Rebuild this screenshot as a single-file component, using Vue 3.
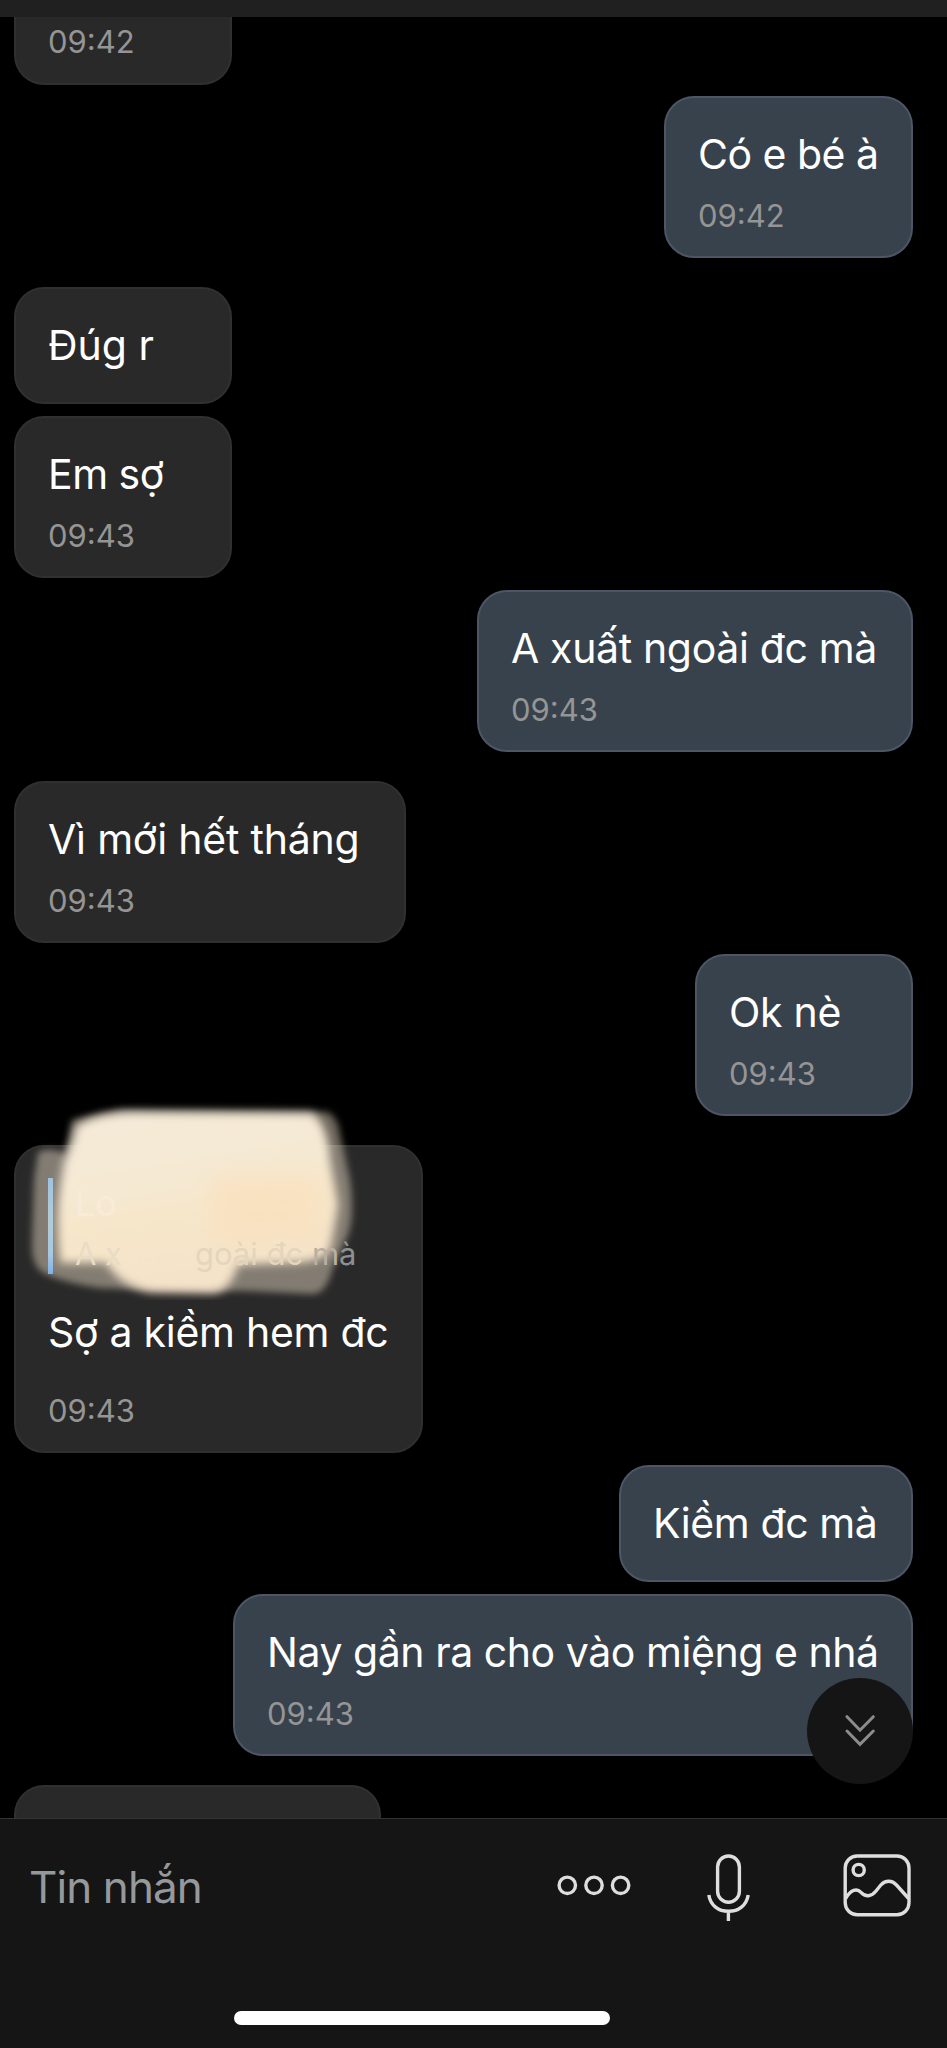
<script setup>
const messages = [
  { side: 'in', time: '09:42', width: 218, gap: 11, cut: true },
  { side: 'out', text: 'Có e bé à', time: '09:42', width: 249, gap: 29, tracking: -0.5 },
  { side: 'in', text: 'Đúg r', width: 218, gap: 12, tracking: 0 },
  { side: 'in', text: 'Em sợ', time: '09:43', width: 218, gap: 12, tracking: -0.5 },
  { side: 'out', text: 'A xuất ngoài đc mà', time: '09:43', width: 436, gap: 29, tracking: -0.35 },
  { side: 'in', text: 'Vì mới hết tháng', time: '09:43', width: 392, gap: 11, tracking: -0.2 },
  { side: 'out', text: 'Ok nè', time: '09:43', width: 218, gap: 29, tracking: -0.3 },
  { side: 'in', text: 'Sợ a kiềm hem đc', time: '09:43', width: 409, gap: 12, quote: true, tracking: -0.27 },
  { side: 'out', text: 'Kiềm đc mà', width: 294, gap: 12, tracking: -0.4 },
  { side: 'out', text: 'Nay gần ra cho vào miệng e nhá', time: '09:43', width: 680, gap: 29, tracking: -0.45 },
  { side: 'in', text: '', width: 367, gap: 0 },
]
</script>

<template>
  <div class="screen">
    <header class="topbar"></header>
    <main class="chat">
      <div
        v-for="(m, i) in messages"
        :key="i"
        class="bubble"
        :class="[m.side, { cut: m.cut, short: !m.time, reply: m.quote }]"
        :style="{ width: m.width + 'px', marginBottom: m.gap + 'px' }"
      >
        <div v-if="m.quote" class="quote">
          <svg class="smudge" width="360" height="210" viewBox="0 0 360 210">
            <defs>
              <filter id="soft" x="-10%" y="-10%" width="120%" height="120%"><feGaussianBlur stdDeviation="5" /></filter>
              <filter id="edge" x="-10%" y="-10%" width="120%" height="120%"><feGaussianBlur stdDeviation="3.5" /></filter>
              <filter id="wide" x="-30%" y="-30%" width="160%" height="160%"><feGaussianBlur stdDeviation="12" /></filter>
              <linearGradient id="cream" x1="0.2" y1="0" x2="0.45" y2="1">
                <stop offset="0" stop-color="#f5ead8" />
                <stop offset="0.4" stop-color="#f5e9d3" />
                <stop offset="0.6" stop-color="#f6e6c9" />
                <stop offset="1" stop-color="#f4e2c9" />
              </linearGradient>
            </defs>
            <path
              class="halo"
              filter="url(#edge)"
              d="M38 62 Q50 56 66 64 L72 30 L120 20 L328 22 Q338 28 340 44 L350 90 Q355 125 348 145 L332 180 Q326 204 312 204 L250 201 L100 198 Q60 192 42 182 Q31 174 32 152 L34 90 Z"
            />
            <path
              filter="url(#soft)"
              fill="url(#cream)"
              d="M64 72 Q74 50 76 36 Q94 24 128 22 L312 23 Q328 34 330 70 L338 115 L330 160 Q320 173 286 173 L238 175 Q231 200 214 203 L150 202 Q120 196 106 173 L60 173 Q55 130 60 96 Z"
            />
            <path class="peach" filter="url(#wide)" d="M210 84 L318 86 L318 148 L215 152 Z" />
          </svg>
          <div class="quote-bar"></div>
          <div class="quote-body">
            <div class="quote-name">Lo</div>
            <div class="quote-text"><span class="g1">A x</span><span class="g0">uất n</span><span class="g2">goài đc</span><span class="g3"> m</span><span class="g4">à</span></div>
          </div>
        </div>
        <div v-if="m.text" class="text" :style="{ letterSpacing: m.tracking + 'px' }">{{ m.text }}</div>
        <div v-if="m.time" class="time">{{ m.time }}</div>
      </div>
      <div class="jump">
        <svg width="106" height="106" viewBox="0 0 106 106">
          <path d="M40 38.7 L53 52.2 L66.3 38.7 M40 53 L53 66.3 L66.3 53" />
        </svg>
      </div>
    </main>
    <footer class="composer">
      <div class="row">
        <div class="placeholder">Tin nhắn</div>
        <svg class="icons" width="370" height="80" viewBox="550 1845 370 80">
          <circle cx="567.3" cy="1885.3" r="8.2" />
          <circle cx="594" cy="1885.3" r="8.2" />
          <circle cx="620.6" cy="1885.3" r="8.2" />
          <rect x="717.6" y="1856" width="21.8" height="46.2" rx="10.9" />
          <path d="M708.8 1895 C710.5 1905.5 718.5 1911.3 728.5 1911.3 C738.5 1911.3 746.5 1905.5 748.2 1895 M728.4 1911.3 V1921" />
          <rect x="845.2" y="1856" width="63.8" height="58.8" rx="12" />
          <circle cx="858.7" cy="1870" r="5.6" />
          <path d="M845.8 1898.5 C850.5 1889.5 857 1888 861 1892.3 C865.5 1897.3 871.5 1896.8 876 1891 L881 1884.8 C885.5 1880 892 1880.2 896.5 1885 L908.6 1898.5" />
        </svg>
      </div>
      <div class="home"></div>
    </footer>
  </div>
</template>

<style>
html,
body {
  margin: 0;
  background: #000;
}
</style>

<style scoped>
.screen {
  width: 947px;
  height: 2048px;
  display: flex;
  flex-direction: column;
  overflow: hidden;
  background: #000;
  font-family: Inter, Roboto, "Liberation Sans", sans-serif;
}
.topbar {
  flex: none;
  height: 17px;
  background: #202020;
}
.chat {
  position: relative;
  height: 1801px;
  flex: none;
  box-sizing: border-box;
  padding: 0 34px 0 14px;
  display: flex;
  flex-direction: column;
  overflow: hidden;
}
.bubble {
  box-sizing: border-box;
  flex: none;
  height: 162px;
  padding: 31px 0 0 32px;
  border: 2px solid #303030;
  border-radius: 30px;
  background: #292929;
  align-self: flex-start;
  white-space: nowrap;
}
.out {
  align-self: flex-end;
  border-color: #4d5665;
  background: #37424d;
}
.short {
  height: 117px;
}
.cut {
  height: 68px;
  padding-top: 6px;
  border-top: 0;
  border-radius: 0 0 30px 30px;
}
.reply {
  height: 308px;
}
.text {
  height: 50px;
  line-height: 50px;
  font-size: 41px;
  color: #fff;
}
.time {
  margin-top: 18px;
  height: 38px;
  line-height: 38px;
  font-size: 31px;
  color: #959595;
}
.cut .time {
  margin-top: 0;
}
.reply .time {
  margin-top: 35px;
}
.quote {
  position: relative;
  display: flex;
  height: 96px;
  margin-bottom: 33px;
}
.smudge {
  position: absolute;
  left: -48px;
  top: -88px;
}
.halo {
  fill: #f5e6cf;
  fill-opacity: 0.44;
}
.peach {
  fill: #fbdfbc;
  fill-opacity: 0.7;
}
.quote-bar {
  position: relative;
  width: 5px;
  height: 96px;
  background: linear-gradient(#9fc4e0, #b4cbd6 45%, #a6c8e0 80%, #7fb0e6);
}
.quote-body {
  position: relative;
  margin-left: 22px;
}
.quote-name {
  height: 50px;
  line-height: 50px;
  font-size: 36px;
  color: #f8ecd9;
}
.quote-text {
  height: 40px;
  margin-top: 6px;
  line-height: 40px;
  font-size: 31px;
}
.g0 {
  color: #f5e5cb;
}
.g1 {
  color: #e9dcc6;
}
.g2 {
  color: #e4d5bd;
}
.g3 {
  color: #b8b0a2;
}
.g4 {
  color: #8c9092;
}
.jump {
  position: absolute;
  left: 807px;
  top: 1661px;
  width: 106px;
  height: 106px;
  border-radius: 50%;
  background: #151515;
}
.jump path {
  fill: none;
  stroke: #8c8c8c;
  stroke-width: 3;
  stroke-linecap: round;
}
.composer {
  flex: none;
  box-sizing: border-box;
  height: 230px;
  border-top: 1px solid #333;
  background: #151515;
}
.row {
  display: flex;
  justify-content: space-between;
  padding: 26px 27px 0 29px;
}
.placeholder {
  margin-top: 15px;
  height: 54px;
  line-height: 54px;
  font-size: 44px;
  letter-spacing: -0.9px;
  color: #96999c;
}
.icons {
  fill: none;
  stroke: #dedede;
  stroke-width: 3.4;
}
.home {
  width: 376px;
  height: 14px;
  margin: 86px 0 0 234px;
  border-radius: 7px;
  background: #fff;
}
</style>
